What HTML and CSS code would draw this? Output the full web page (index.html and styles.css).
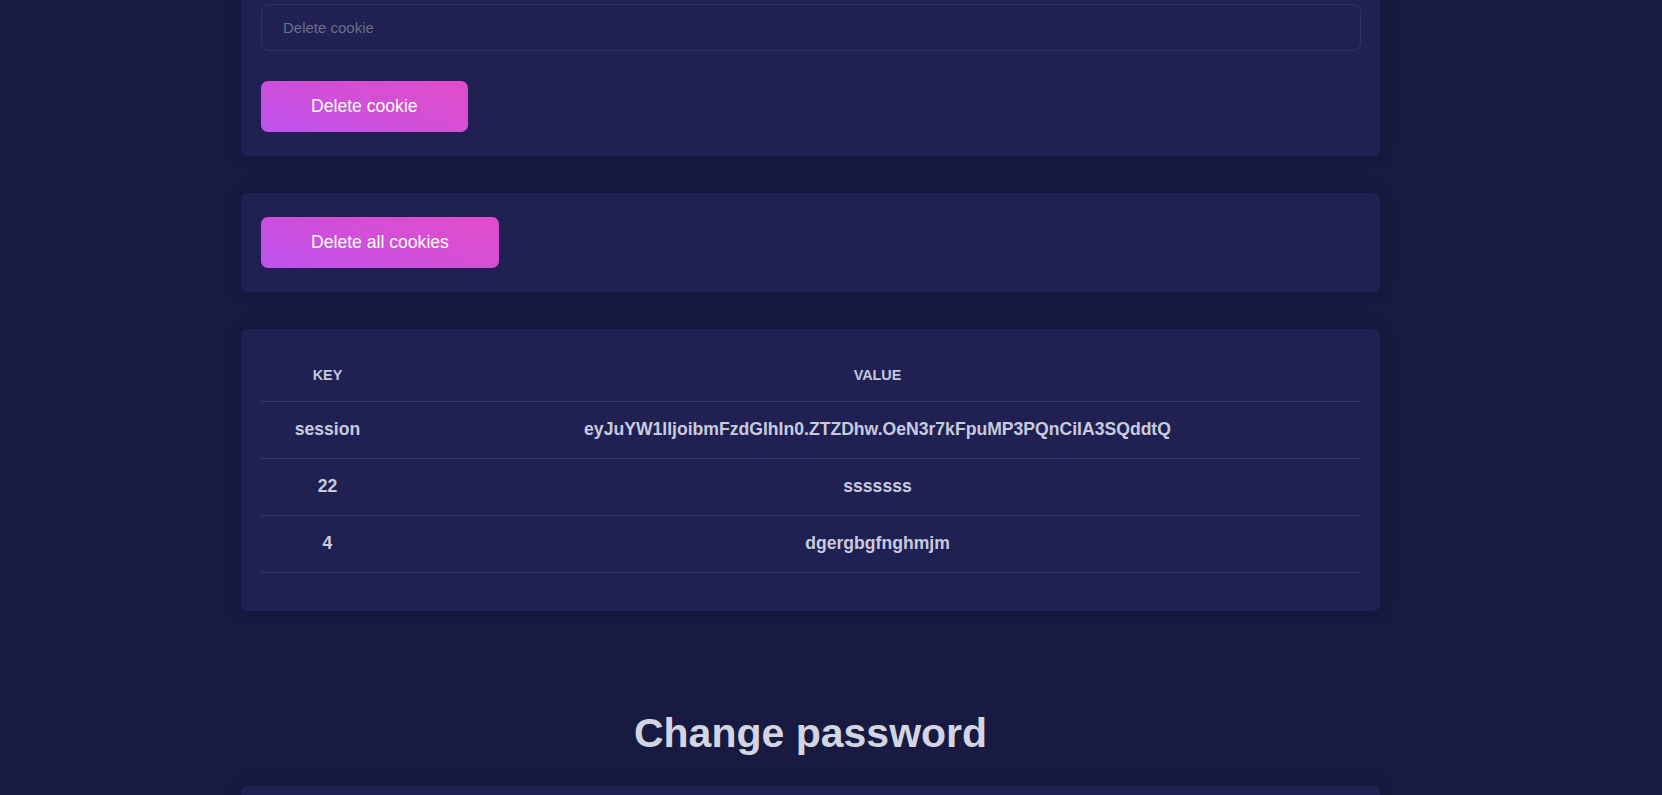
FILE: index.html
```html
<!DOCTYPE html>
<html lang="en">
<head>
<meta charset="utf-8">
<title>Cookies</title>
<link rel="stylesheet" href="styles.css">
</head>
<body>
<div class="page">
  <main class="container">
    <section class="card card-first">
      <form class="form">
        <input class="field" type="text" placeholder="Delete cookie">
        <button class="btn" type="button">Delete cookie</button>
      </form>
    </section>

    <section class="card">
      <button class="btn" type="button">Delete all cookies</button>
    </section>

    <section class="card card-table">
      <table class="cookies">
        <thead>
          <tr><th class="col-key">Key</th><th>Value</th></tr>
        </thead>
        <tbody>
          <tr><td>session</td><td>eyJuYW1lIjoibmFzdGlhIn0.ZTZDhw.OeN3r7kFpuMP3PQnCiIA3SQddtQ</td></tr>
          <tr><td>22</td><td>sssssss</td></tr>
          <tr><td>4</td><td>dgergbgfnghmjm</td></tr>
        </tbody>
      </table>
    </section>

    <h2 class="section-title">Change password</h2>

    <section class="card card-last"></section>
  </main>
</div>
</body>
</html>
```

FILE: styles.css
```css
* { box-sizing: border-box; }

html, body {
  margin: 0;
  padding: 0;
  background: #181a42;
  font-family: "Liberation Sans", Arial, sans-serif;
  color: #c9cbe0;
  overflow: hidden;
}

.page {
  padding-right: 41px;
}

.container {
  width: 1139px;
  margin: 0 auto;
}

.card {
  background: #202152;
  border-radius: 6px;
  padding: 24px 19px 24px 20px;
  margin-bottom: 37px;
  box-shadow: 0 0 14px rgba(8, 10, 35, 0.35);
}

.card-first {
  margin-top: -20px;
}

.form {
  display: flex;
  flex-direction: column;
  align-items: flex-start;
  gap: 30px;
}

.field {
  width: 100%;
  height: 47px;
  border: 1px solid #2e3459;
  border-radius: 8px;
  background: transparent;
  padding: 0 21px;
  font-family: "Liberation Sans", Arial, sans-serif;
  font-size: 15px;
  color: #c9cbe0;
  outline: none;
}

.field::placeholder {
  color: #6a6e8c;
}

.btn {
  display: inline-block;
  border: 0;
  border-radius: 7px;
  padding: 15px 50px;
  line-height: 21px;
  font-family: "Liberation Sans", Arial, sans-serif;
  font-size: 17.6px;
  color: #ffffff;
  background: linear-gradient(20deg, #bd52f0 0%, #d34fd6 55%, #e14cc9 100%);
  cursor: pointer;
}

.card-table {
  padding-top: 25px;
  padding-bottom: 38px;
}

.cookies {
  width: 100%;
  border-collapse: collapse;
  text-align: center;
}

.cookies th {
  height: 47px;
  padding: 0 0 4px;
  font-size: 14.4px;
  font-weight: bold;
  text-transform: uppercase;
  color: #c3c6dd;
  border-bottom: 1px solid #363b6c;
  vertical-align: middle;
}

.cookies .col-key {
  width: 133px;
}

.cookies td {
  height: 57px;
  padding: 0;
  font-size: 17.6px;
  font-weight: bold;
  color: #c8cadf;
  border-bottom: 1px solid #363b6c;
  vertical-align: middle;
}

.section-title {
  margin: 98px 0 29px;
  text-align: center;
  font-size: 41px;
  line-height: 48px;
  font-weight: bold;
  color: #d3d5e3;
}

.card-last {
  height: 120px;
}
```
